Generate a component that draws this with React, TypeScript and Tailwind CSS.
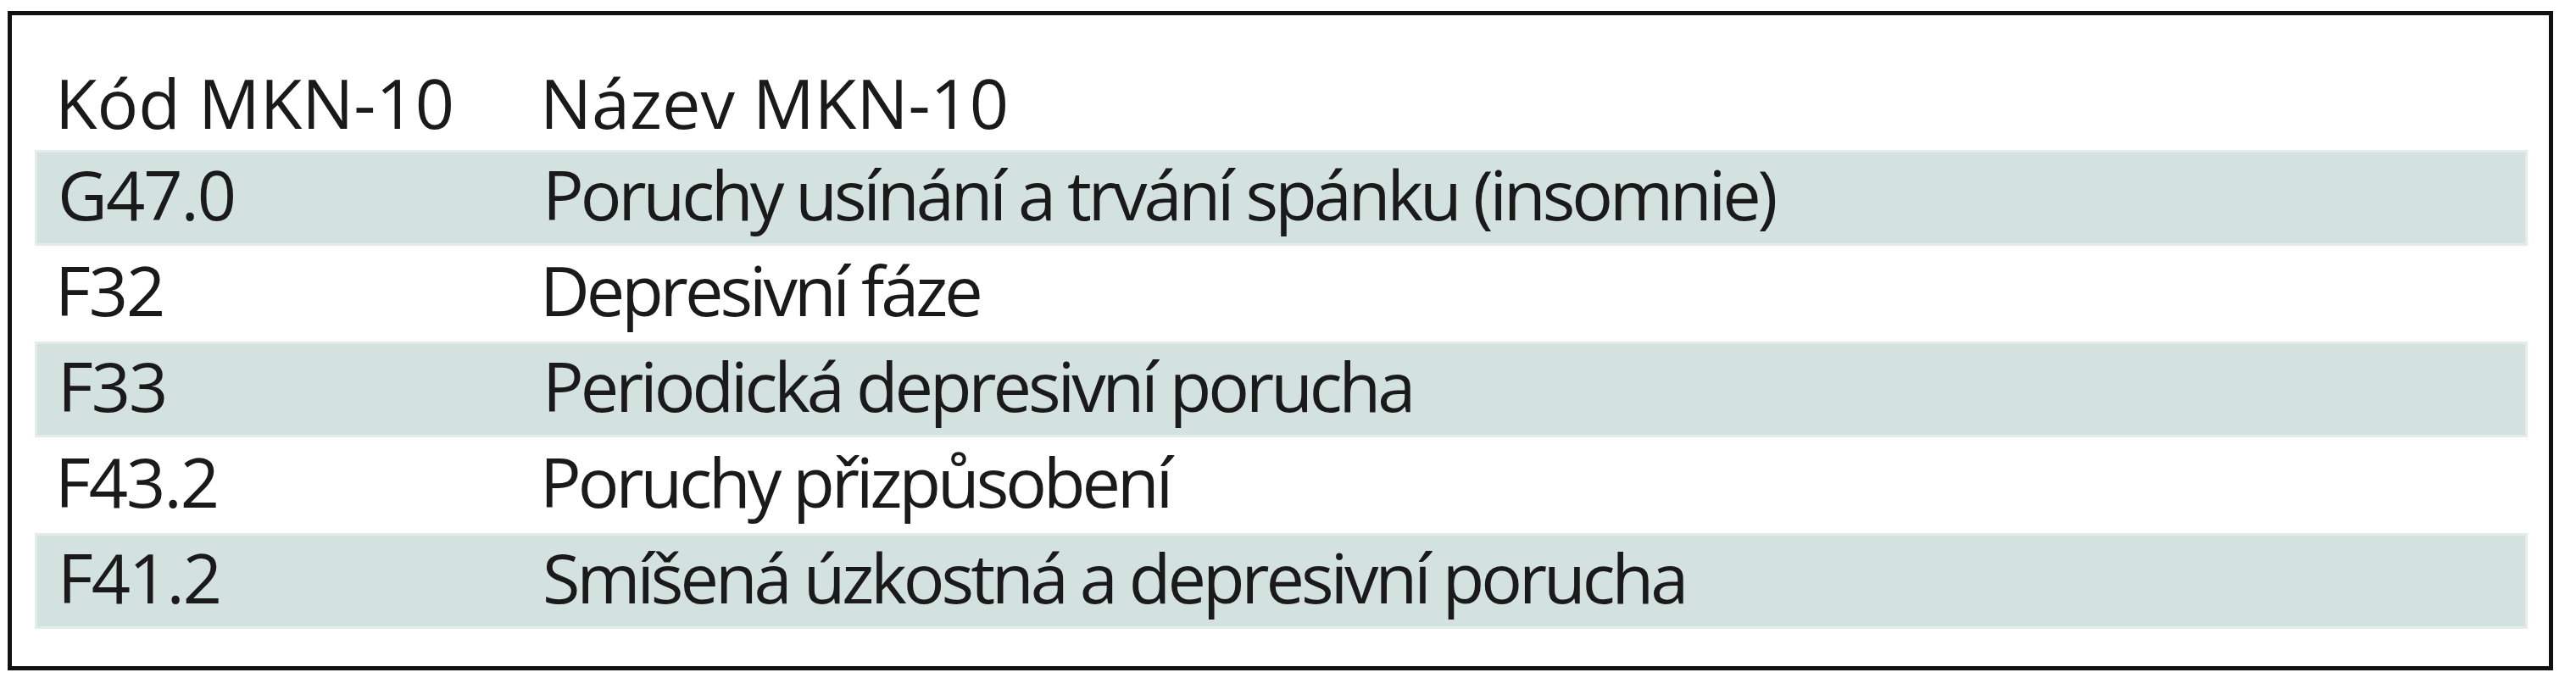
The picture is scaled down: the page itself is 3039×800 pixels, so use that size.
type Row = { code: string; name: string };

const rows: Row[] = [
  { code: "G47.0", name: "Poruchy usínání a trvání spánku (insomnie)" },
  { code: "F32", name: "Depresivní fáze" },
  { code: "F33", name: "Periodická depresivní porucha" },
  { code: "F43.2", name: "Poruchy přizpůsobení" },
  { code: "F41.2", name: "Smíšená úzkostná a depresivní porucha" },
];

export default function App() {
  return (
    <div className="min-h-[800px] bg-white pl-[9px] pt-[13px] font-['Open_Sans',sans-serif] text-[81px] text-[#1a1a1a]">
      <div className="h-[778px] w-[3003px] border-[5px] border-[#111] pl-[27px] pr-[25px] pt-[62px]">
        <div className="grid h-[97px] grid-cols-[596px_1fr] leading-[81px] font-medium">
          <div className="pl-[24px]">Kód MKN-10</div>
          <div>Název MKN-10</div>
        </div>
        {rows.map((row, i) => (
          <div
            key={row.code}
            className={
              i % 2 === 0
                ? "grid h-[113px] grid-cols-[596px_1fr] items-center border-[3px] border-[#e4ecea] bg-[#d3e2de] pb-[10px] leading-[81px]"
                : "grid h-[113px] grid-cols-[596px_1fr] items-center pb-[10px] leading-[81px]"
            }
          >
            <div className="pl-[24px] tracking-[-2px]">{row.code}</div>
            <div className="tracking-[-4px]">{row.name}</div>
          </div>
        ))}
      </div>
    </div>
  );
}
